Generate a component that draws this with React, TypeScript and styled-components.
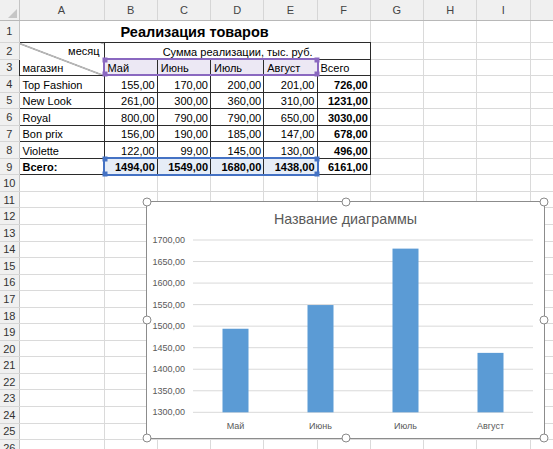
import React from 'react';
import styled, { createGlobalStyle } from 'styled-components';

const GlobalStyle = createGlobalStyle`
  html, body {
    margin: 0;
    padding: 0;
    background: #fff;
  }
  body {
    font-family: "Liberation Sans", Arial, sans-serif;
    overflow: hidden;
  }
`;

const LETTERS = ['A', 'B', 'C', 'D', 'E', 'F', 'G', 'H', 'I', 'J'];
const EXTRA = ['G', 'H', 'I', 'J'];

const stores = [
  { name: 'Top Fashion', values: ['155,00', '170,00', '200,00', '201,00'], total: '726,00' },
  { name: 'New Look', values: ['261,00', '300,00', '360,00', '310,00'], total: '1231,00' },
  { name: 'Royal', values: ['800,00', '790,00', '790,00', '650,00'], total: '3030,00' },
  { name: 'Bon prix', values: ['156,00', '190,00', '185,00', '147,00'], total: '678,00' },
  { name: 'Violette', values: ['122,00', '99,00', '145,00', '130,00'], total: '496,00' },
];

const months = ['Май', 'Июнь', 'Июль', 'Август'];
const totals = ['1494,00', '1549,00', '1680,00', '1438,00'];
const series = [1494, 1549, 1680, 1438];
const ticks = [1700, 1650, 1600, 1550, 1500, 1450, 1400, 1350, 1300];

const Sheet = styled.div`
  position: relative;
  width: 553px;
  height: 449px;
  overflow: hidden;
`;

const Grid = styled.table`
  border-collapse: collapse;
  table-layout: fixed;
  width: 583px;
  font-size: 11px;
  color: #000;

  tr {
    height: 16.55px;
  }
  tr.head {
    height: 20px;
  }
  tr.title {
    height: 22.5px;
  }
`;

const Corner = styled.th`
  position: relative;
  background: #f0f0f0;
  border-right: 1px solid #c4c4c4;
  border-bottom: 1px solid #b8b8b8;
  padding: 0;

  &::after {
    content: '';
    position: absolute;
    right: 2px;
    bottom: 2px;
    border-style: solid;
    border-width: 0 0 9px 9px;
    border-color: transparent transparent #c6c6c6 transparent;
  }
`;

const ColHead = styled.th`
  background: #f0f0f0;
  border-right: 1px solid #d6d6d6;
  border-bottom: 1px solid #b8b8b8;
  font-weight: 400;
  font-size: 11px;
  color: #444;
  padding: 0;
  text-align: center;
  overflow: hidden;
`;

const RowHead = styled.th`
  background: #f0f0f0;
  border-right: 1px solid #c4c4c4;
  border-bottom: 1px solid #d6d6d6;
  font-weight: 400;
  font-size: 11px;
  color: #333;
  padding: 0;
  text-align: center;
  vertical-align: middle;
`;

const Cell = styled.td<{ $boxed?: boolean; $align?: string; $bold?: boolean; $tint?: string }>`
  border: 1px solid ${p => (p.$boxed ? '#2b2b2b' : '#dadada')};
  padding: 0 2px 0 3px;
  text-align: ${p => p.$align ?? 'left'};
  font-weight: ${p => (p.$bold ? 700 : 400)};
  background: ${p => p.$tint ?? 'transparent'};
  white-space: nowrap;
  overflow: hidden;
  vertical-align: bottom;
  line-height: 14px;
`;

const TitleCell = styled.td`
  border: 1px solid #dadada;
  border-bottom-color: #2b2b2b;
  text-align: center;
  vertical-align: bottom;
  font-size: 14.5px;
  font-weight: 700;
  line-height: 19px;
  padding: 0;
`;

const DiagCell = styled.td`
  border: 1px solid #2b2b2b;
  padding: 0;
  background: linear-gradient(
    to top right,
    transparent calc(50% - 0.7px),
    #3a3a3a 50%,
    transparent calc(50% + 0.7px)
  );
`;

const DiagInner = styled.div`
  height: 32px;
  display: flex;
  flex-direction: column;
  justify-content: space-between;
  padding: 1px 4px 0 3px;
  line-height: 14px;
  box-sizing: border-box;

  span:first-child {
    text-align: right;
  }
`;

const Range = styled.div<{ $top: number; $color: string }>`
  position: absolute;
  left: 103px;
  top: ${p => p.$top}px;
  width: 216px;
  height: 18.6px;
  box-sizing: border-box;
  border: 2px solid ${p => p.$color};
  pointer-events: none;
`;

const Grip = styled.span<{ $x: string; $y: string; $color: string }>`
  position: absolute;
  left: ${p => p.$x};
  top: ${p => p.$y};
  width: 5px;
  height: 5px;
  background: ${p => p.$color};
  transform: translate(-50%, -50%);
`;

const Chart = styled.div`
  position: absolute;
  left: 146px;
  top: 201px;
  width: 399px;
  height: 238px;
  box-sizing: border-box;
  border: 1px solid #8c8c8c;
  background: #fff;
  display: flex;
  flex-direction: column;
`;

const ChartTitle = styled.div`
  height: 30px;
  padding-top: 8px;
  box-sizing: border-box;
  text-align: center;
  font-size: 14.3px;
  line-height: 18px;
  color: #595959;
`;

const Plot = styled.svg`
  display: block;
  font-family: "Liberation Sans", Arial, sans-serif;
  font-size: 9px;
  fill: #595959;
`;

const Knob = styled.span<{ $x: string; $y: string }>`
  position: absolute;
  left: ${p => p.$x};
  top: ${p => p.$y};
  width: 7px;
  height: 7px;
  border: 1.3px solid #8a8a8a;
  border-radius: 50%;
  background: #fff;
  transform: translate(-50%, -50%);
`;

const knobs = [
  ['0%', '0%'], ['50%', '0%'], ['100%', '0%'],
  ['0%', '50%'], ['100%', '50%'],
  ['0%', '100%'], ['50%', '100%'], ['100%', '100%'],
];

const grips = [['0%', '0%'], ['100%', '0%'], ['0%', '100%'], ['100%', '100%']];

const Y_TOP = 8;
const Y_STEP = 21.54;
const yOf = (v: number) => Y_TOP + ((1700 - v) / 50) * Y_STEP;

const Empty = ({ n }: { n: number }) => (
  <>
    {Array.from({ length: n }).map((_, i) => (
      <Cell key={i} />
    ))}
  </>
);

const App = () => {
  return (
    <>
      <GlobalStyle />
      <Sheet>
        <Grid>
          <colgroup>
            <col style={{ width: 19 }} />
            <col style={{ width: 85 }} />
            {LETTERS.slice(1).map(l => (
              <col key={l} style={{ width: 53.25 }} />
            ))}
          </colgroup>
          <tbody>
            <tr className="head">
              <Corner />
              {LETTERS.map(l => (
                <ColHead key={l}>{l}</ColHead>
              ))}
            </tr>
            <tr className="title">
              <RowHead>1</RowHead>
              <TitleCell colSpan={6}>Реализация товаров</TitleCell>
              <Empty n={EXTRA.length} />
            </tr>
            <tr>
              <RowHead>2</RowHead>
              <DiagCell rowSpan={2}>
                <DiagInner>
                  <span>месяц</span>
                  <span>магазин</span>
                </DiagInner>
              </DiagCell>
              <Cell $boxed $align="center" colSpan={5}>
                Сумма реализации, тыс. руб.
              </Cell>
              <Empty n={EXTRA.length} />
            </tr>
            <tr>
              <RowHead>3</RowHead>
              {months.map(m => (
                <Cell key={m} $boxed $tint="#ece8f4">
                  {m}
                </Cell>
              ))}
              <Cell $boxed>Всего</Cell>
              <Empty n={EXTRA.length} />
            </tr>
            {stores.map((s, i) => (
              <tr key={s.name}>
                <RowHead>{i + 4}</RowHead>
                <Cell $boxed>{s.name}</Cell>
                {s.values.map((v, j) => (
                  <Cell key={j} $boxed $align="right">
                    {v}
                  </Cell>
                ))}
                <Cell $boxed $align="right" $bold>
                  {s.total}
                </Cell>
                <Empty n={EXTRA.length} />
              </tr>
            ))}
            <tr>
              <RowHead>9</RowHead>
              <Cell $boxed $bold>
                Всего:
              </Cell>
              {totals.map(t => (
                <Cell key={t} $boxed $bold $align="right" $tint="#e6edf7">
                  {t}
                </Cell>
              ))}
              <Cell $boxed $bold $align="right">
                6161,00
              </Cell>
              <Empty n={EXTRA.length} />
            </tr>
            {Array.from({ length: 17 }).map((_, i) => (
              <tr key={i}>
                <RowHead>{i + 10}</RowHead>
                <Empty n={LETTERS.length} />
              </tr>
            ))}
          </tbody>
        </Grid>

        <Range $top={57.6} $color="#8a68c0">
          {grips.map(([x, y]) => (
            <Grip key={x + y} $x={x} $y={y} $color="#8a68c0" />
          ))}
        </Range>
        <Range $top={157} $color="#4472c4">
          {grips.map(([x, y]) => (
            <Grip key={x + y} $x={x} $y={y} $color="#4472c4" />
          ))}
        </Range>

        <Chart>
          <ChartTitle>Название диаграммы</ChartTitle>
          <Plot width={397} height={206} viewBox="0 0 397 206">
            {ticks.map(t => (
              <g key={t}>
                <line x1={46} x2={386} y1={yOf(t)} y2={yOf(t)} stroke="#d9d9d9" strokeWidth={1} />
                <text x={38} y={yOf(t) + 3} textAnchor="end">
                  {t},00
                </text>
              </g>
            ))}
            {series.map((v, i) => {
              const cx = 46 + 42.5 + i * 85;
              return (
                <g key={i}>
                  <rect x={cx - 13} y={yOf(v)} width={26} height={yOf(1300) - yOf(v)} fill="#5b9bd5" />
                  <text x={cx} y={197} textAnchor="middle">
                    {months[i]}
                  </text>
                </g>
              );
            })}
          </Plot>
          {knobs.map(([x, y]) => (
            <Knob key={x + y} $x={x} $y={y} />
          ))}
        </Chart>
      </Sheet>
    </>
  );
};

export default App;
